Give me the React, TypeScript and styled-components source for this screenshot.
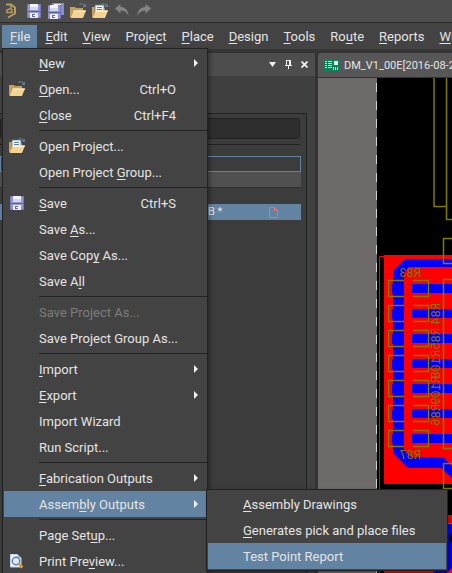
import React from "react";
import styled, { createGlobalStyle, css } from "styled-components";

const ink = "#e4e4e4";
const edge = "#222222";
const face = "#434343";
const accent = "#6283a2";

const GlobalStyle = createGlobalStyle`
  * { box-sizing: border-box; }
  body {
    margin: 0;
    background: #3c3c3c;
    color: ${ink};
    font-family: Roboto, "Noto Sans", sans-serif;
    font-size: 13px;
  }
  button {
    border: 0;
    padding: 0;
    background: none;
    color: inherit;
    font: inherit;
  }
  svg { flex: none; }
  u { text-underline-offset: 2px; text-decoration-thickness: 1px; text-decoration-skip-ink: none; }
`;

const Window = styled.div`
  display: flex;
  flex-direction: column;
  height: 100vh;
  overflow: hidden;
`;

const QuickBar = styled.header`
  display: flex;
  flex: none;
  align-items: center;
  gap: 6px;
  height: 23px;
  padding-left: 4px;
  background: #4d4d4d;
  border-bottom: 1px solid #2c2c2c;
`;

const ToolButton = styled.button`
  display: flex;
  width: 16px;
  height: 16px;
`;

const Logo = styled.span`
  display: flex;
  width: 16px;
  height: 16px;
`;

const MenuBar = styled.nav`
  display: flex;
  flex: none;
  align-items: stretch;
  height: 28px;
  padding: 2px 0 1px 2px;
  background: ${face};
  border-bottom: 2px solid #363636;
`;

const MenuSlot = styled.div`
  position: relative;
  display: flex;
  flex: none;
`;

const MenuTitle = styled.button<{ $open?: boolean }>`
  padding: 0 7px 0 8px;
  line-height: 23px;
  white-space: nowrap;
  background: ${(p) => (p.$open ? accent : "transparent")};
`;

const popup = css`
  position: absolute;
  z-index: 2;
  background: ${face};
  border: 1px solid ${edge};
  box-shadow: 2px 2px 4px rgba(0, 0, 0, 0.35);
`;

const FileMenu = styled.div`
  ${popup}
  top: 23px;
  left: 0;
  width: 206px;
  padding: 1px;
`;

const SubMenu = styled.div`
  ${popup}
  top: -2px;
  left: 100%;
  width: 242px;
  padding: 1px;
`;

const ItemSlot = styled.div`
  position: relative;
`;

const Item = styled.button<{ $active?: boolean }>`
  display: grid;
  grid-template-columns: 35px 1fr auto 30px;
  align-items: center;
  width: 100%;
  height: 26px;
  text-align: left;
  white-space: nowrap;
  background: ${(p) => (p.$active ? accent : "transparent")};
  &:disabled { color: #7c7c7c; }
`;

const ItemIcon = styled.span`
  display: flex;
  padding-left: 5px;
`;

const ItemArrow = styled.span`
  display: flex;
  justify-content: flex-end;
  padding-right: 8px;
`;

const Separator = styled.hr`
  height: 1px;
  margin: 2px -1px 2px 35px;
  border: 0;
  background: ${edge};
`;

const Workspace = styled.main`
  display: flex;
  flex: 1;
  min-height: 0;
  padding-top: 2px;
  gap: 3px;
  background: #333333;
`;

const Panel = styled.section`
  display: flex;
  flex: none;
  flex-direction: column;
  width: 315px;
  background: #404040;
`;

const PanelHeader = styled.div`
  display: flex;
  flex: none;
  align-items: center;
  justify-content: flex-end;
  height: 23px;
  padding-right: 3px;
  background: #4d4d4d;
`;

const PanelButton = styled.button`
  display: flex;
  width: 16px;
  height: 12px;
  align-items: center;
  justify-content: center;
`;

const PanelBody = styled.div`
  display: flex;
  flex: 1;
  flex-direction: column;
  margin: 37px 8px 0 0;
  padding: 4px 5px 0 0;
  background: #3c3c3c;
  border: 1px solid ${edge};
  border-width: 1px 1px 0 0;
`;

const Search = styled.input`
  flex: none;
  height: 21px;
  margin-right: 1px;
  padding: 0 6px;
  color: ${ink};
  background: #2e2e2e;
  border: 1px solid ${edge};
  border-radius: 3px;
`;

const PanelRule = styled.hr`
  flex: none;
  height: 1px;
  margin: 5px 1px 11px 0;
  border: 0;
  background: ${edge};
`;

const Row = styled.div<{ $kind: "outlined" | "filled" | "selected" }>`
  flex: none;
  height: 16px;
  line-height: 16px;
  font-size: 11px;
  ${(p) => p.$kind === "outlined" && css`border: 1px solid ${accent};`}
  ${(p) => p.$kind === "filled" && css`
    margin-bottom: 16px;
    background: #505050;
    border-bottom: 1px solid #303030;
  `}
  ${(p) => p.$kind === "selected" && css`
    display: flex;
    align-items: center;
    justify-content: space-between;
    padding: 0 23px 0 208px;
    background: ${accent};
  `}
`;

const Document = styled.section`
  display: flex;
  flex: 1;
  flex-direction: column;
  min-width: 0;
`;

const DocTab = styled.button`
  display: flex;
  flex: none;
  align-items: center;
  gap: 4px;
  height: 25px;
  padding-left: 6px;
  overflow: hidden;
  font-size: 11px;
  white-space: nowrap;
  background: #575757;
  border-bottom: 1px solid #333333;
  border-radius: 3px 0 0 0;
`;

const Canvas = styled.svg`
  display: block;
  flex: 1;
  width: 100%;
  min-height: 0;
  background: #000000;
`;

const LogoIcon = () => (
  <svg width="16" height="16" viewBox="0 0 16 16" fill="none" stroke="#b89b5e" strokeWidth="2">
    <path d="M2 1.500 H7 L11 4.500 V10.500 L4 14.500" />
    <path d="M7 2 V5.500 L3 7 V9.500 H8 V6" strokeWidth="1.500" />
  </svg>
);

const Disk = ({ back = false }: { back?: boolean }) => (
  <svg width="16" height="16" viewBox="0 0 16 16" shapeRendering="crispEdges">
    {back && <path d="M4 0h12v12h-3V3H4z" fill="#8a8ccc" />}
    {back && <path d="M6 1h7v2H6z" fill="#f2f3fb" />}
    <g transform={back ? "translate(-1 2)" : "translate(1 1)"}>
      <path d="M0 0h14v14H0z" fill="#7779b8" />
      <path d="M1 1h12v12H1z" fill="#9496d0" />
      <path d="M3 0h8v6H3z" fill="#f2f3fb" />
      <path d="M3 3h8v3H3z" fill="#d5d8ec" />
      <path d="M0 7h14v1H0z" fill="#5f61a3" />
      <path d="M3 9h8v5H3z" fill="#eceef8" />
      <path d="M5 10h3v3H5z" fill="#6365a8" />
      <path d="M6 11h2v1H6z" fill="#ffffff" />
    </g>
  </svg>
);

const Folder = ({ page = false }: { page?: boolean }) => (
  <svg width="17" height="16" viewBox="0 0 17 16">
    <path d="M0 4h5l1 1h7v9H0z" fill="#c79f5b" />
    {page && (
      <>
        <path d="M3 2h9v9H3z" fill="#f4f6fb" stroke="#5e7690" strokeWidth="0.800" />
        <path d="M5 4.500h5M5 6.500h5M5 8.500h5" stroke="#5d7fae" />
      </>
    )}
    <path d="M4 7.500h12L13 15H.5z" fill="#f3d394" />
    <path d="M4 7.500h12L15.500 9H3.500z" fill="#fff1c9" />
    <path d="M9.500 1.500c2-1.600 4-1 5 1.500" fill="none" stroke="#5d8298" strokeWidth="1.200" strokeDasharray="2.500 1" />
    <path d="M12.500 4h3.500V.5z" fill="#5d8298" />
  </svg>
);

const Bend = ({ flip = false }: { flip?: boolean }) => (
  <svg width="16" height="16" viewBox="0 0 16 16">
    <g transform={flip ? "matrix(-1 0 0 1 16 0)" : undefined}>
      <path d="M1 5.500 L6.500 1 V4 C11.500 4 14.500 7.500 14.500 13 C12.500 8.800 10.500 7.500 6.500 7.500 V10.500 Z" fill="#858585" />
    </g>
  </svg>
);

const Preview = () => (
  <svg width="16" height="16" viewBox="0 0 16 16">
    <path d="M1.500 1.500h7l3.500 3.500v9H1.500z" fill="#e8f0fa" stroke="#c3d3e8" />
    <path d="M8.500 1v4h4z" fill="#9bb6dc" />
    <circle cx="7" cy="8" r="3.700" fill="#dfeaf7" stroke="#5f7ea6" strokeWidth="1.400" />
    <path d="M9.500 10.500l4 4" stroke="#d99b3f" strokeWidth="2.500" />
  </svg>
);

const Arrow = () => (
  <svg width="4" height="8" viewBox="0 0 4 8"><path d="M0 0l4 4-4 4z" fill="#f0f0f0" /></svg>
);

const BoardIcon = () => (
  <svg width="16" height="12" viewBox="0 0 16 12" shapeRendering="crispEdges">
    <path d="M0 0h16v12H0z" fill="#0c8058" />
    <path d="M1 2.500h2M4 2.500h4M1 4.500h2M4 4.500h4M1 6.500h2M4 6.500h4M1 8.500h2M4 8.500h4" stroke="#a9e6c4" />
    <path d="M10 2h4v4h-4z" fill="#eaf5ee" />
    <path d="M9.500 8v3M11.500 8v3M13.500 8v3" stroke="#a9e6c4" />
  </svg>
);

const padRows = [280, 305, 330, 355, 380, 405, 430];
const designators: [string, number][] = [["R84", 303], ["R85", 328], ["R108", 350], ["R109", 376], ["R86", 404]];

const Board = () => (
  <Canvas role="img" aria-label="Board layout">
    <g transform="translate(-318 -78)">
      <rect x="318" y="78" width="59" height="2000" fill="#6e6a69" />
      <path d="M376.500 83V2000" stroke="#cfcfcf" strokeDasharray="9 9" />
      <path d="M384 256.500H379.500V600" fill="none" stroke="#ff0000" />
      <rect x="384" y="255" width="2000" height="229" fill="#ff0000" />
      <path d="M405 259H2000V267H409L404 273V450L411 457H443L460 474V484L452 478L441 468H408L393 453V271Z" fill="#0000ff" />
      {padRows.map((y) => (
        <g key={y}>
          <rect x="392" y={y + 4} width="12" height="10" fill="#0000ff" />
          <rect x="412" y={y + 4} width="1600" height="9" fill="#0000ff" />
          <path d={`M404 ${y + 0.5}H388.500V${y + 16.5}H404M413 ${y + 0.5}H428.500V${y + 16.5}H413`} fill="none" stroke="#807a00" strokeWidth="1.300" />
        </g>
      ))}
      <g fill="none" stroke="#7c7c00" strokeWidth="1.500">
        <path d="M434 78V206.500H446" />
        <path d="M446.500 78V219.500H2000" />
        <path d="M2000 238.500H443.500V263.500H2000" />
        <path d="M2000 279.500H443.500V448.500H2000" />
        <path d="M2000 463.500H443.500V488.500H2000" />
      </g>
      <g fill="#807a00" fontFamily="Liberation Mono, monospace" fontSize="12">
        <text transform="matrix(-1 0 0 1 421 277)">R83</text>
        <text transform="matrix(-1 0 0 1 421 459)">R87</text>
        {designators.map(([name, y]) => (
          <text key={name} transform={`matrix(0 1 1 0 440 ${y})`}>{name}</text>
        ))}
      </g>
      <rect x="384" y="515" width="2000" height="100" fill="#ff0000" />
      <path d="M448 524h6v42l-8 7h-14l14-10z" fill="#0000ff" />
      <circle cx="455" cy="538" r="6" fill="#000000" />
      <path d="M443 523.500h40" stroke="#808000" />
    </g>
  </Canvas>
);

/** Renders a label, underlining the character that follows "&". */
const Mnemonic = ({ text }: { text: string }) => {
  const at = text.indexOf("&");
  if (at < 0) return <>{text}</>;
  return <>{text.slice(0, at)}<u>{text[at + 1]}</u>{text.slice(at + 2)}</>;
};

type Entry = {
  label: string;
  icon?: React.ReactNode;
  keys?: string;
  arrow?: boolean;
  disabled?: boolean;
  active?: boolean;
  children?: Entry[];
};

const fileGroups: Entry[][] = [
  [
    { label: "&New", arrow: true },
    { label: "&Open...", icon: <Folder />, keys: "Ctrl+O" },
    { label: "&Close", keys: "Ctrl+F4" },
  ],
  [
    { label: "Open Project...", icon: <Folder page /> },
    { label: "Open Project &Group..." },
  ],
  [
    { label: "&Save", icon: <Disk />, keys: "Ctrl+S" },
    { label: "Save &As..." },
    { label: "Save Cop&y As..." },
    { label: "Save A&ll" },
  ],
  [
    { label: "Save Project As...", disabled: true },
    { label: "Save Project Group As..." },
  ],
  [
    { label: "&Import", arrow: true },
    { label: "&Export", arrow: true },
    { label: "Import Wizard" },
    { label: "Run Script..." },
  ],
  [
    { label: "&Fabrication Outputs", arrow: true },
    {
      label: "Assem&bly Outputs",
      arrow: true,
      active: true,
      children: [
        { label: "&Assembly Drawings" },
        { label: "&Generates pick and place files" },
        { label: "Test Point Report", active: true },
      ],
    },
  ],
  [
    { label: "Page Set&up..." },
    { label: "Print Pre&view...", icon: <Preview /> },
  ],
];

const MenuEntry = ({ entry }: { entry: Entry }) => (
  <ItemSlot>
    <Item $active={entry.active} disabled={entry.disabled}>
      <ItemIcon>{entry.icon}</ItemIcon>
      <span><Mnemonic text={entry.label} /></span>
      <span>{entry.keys}</span>
      <ItemArrow>{entry.arrow && <Arrow />}</ItemArrow>
    </Item>
    {entry.children && (
      <SubMenu>
        {entry.children.map((child) => <MenuEntry key={child.label} entry={child} />)}
      </SubMenu>
    )}
  </ItemSlot>
);

const topMenus = ["&Edit", "&View", "Proje&ct", "&Place", "&Design", "&Tools", "Ro&ute", "&Reports", "&Window"];

export default function App() {
  return (
    <Window>
      <GlobalStyle />
      <QuickBar>
        <Logo><LogoIcon /></Logo>
        <ToolButton aria-label="Save"><Disk /></ToolButton>
        <ToolButton aria-label="Save all"><Disk back /></ToolButton>
        <ToolButton aria-label="Open"><Folder /></ToolButton>
        <ToolButton aria-label="Open project"><Folder page /></ToolButton>
        <ToolButton aria-label="Undo"><Bend /></ToolButton>
        <ToolButton aria-label="Redo"><Bend flip /></ToolButton>
      </QuickBar>
      <MenuBar>
        <MenuSlot>
          <MenuTitle $open><Mnemonic text="&File" /></MenuTitle>
          <FileMenu>
            {fileGroups.map((group, i) => (
              <React.Fragment key={i}>
                {i > 0 && <Separator />}
                {group.map((entry) => <MenuEntry key={entry.label} entry={entry} />)}
              </React.Fragment>
            ))}
          </FileMenu>
        </MenuSlot>
        {topMenus.map((name) => (
          <MenuSlot key={name}><MenuTitle><Mnemonic text={name} /></MenuTitle></MenuSlot>
        ))}
      </MenuBar>
      <Workspace>
        <Panel>
          <PanelHeader>
            <PanelButton aria-label="Panel menu">
              <svg width="7" height="5" viewBox="0 0 7 5"><path d="M0 0h7L3.500 5z" fill="#f0f0f0" /></svg>
            </PanelButton>
            <PanelButton aria-label="Pin panel">
              <svg width="7" height="9" viewBox="0 0 7 9" shapeRendering="crispEdges">
                <path d="M1 0h5v5h1v1H4v3H3V6H0V5h1zM2 1v4h2V1z" fill="#f0f0f0" fillRule="evenodd" />
              </svg>
            </PanelButton>
            <PanelButton aria-label="Close panel">
              <svg width="7" height="7" viewBox="0 0 7 7"><path d="M.5.5l6 6M6.500.5l-6 6" stroke="#f0f0f0" strokeWidth="1.800" /></svg>
            </PanelButton>
          </PanelHeader>
          <PanelBody>
            <Search aria-label="Search" />
            <PanelRule />
            <Row $kind="outlined" />
            <Row $kind="filled" />
            <Row $kind="selected">
              <span>B *</span>
              <svg width="9" height="11" viewBox="0 0 9 11" fill="none" stroke="#ff6a64">
                <path d="M.5.5h5l3 3v7h-8zM5.500.5v3h3" />
              </svg>
            </Row>
          </PanelBody>
        </Panel>
        <Document>
          <DocTab><BoardIcon />DM_V1_00E[2016-08-2</DocTab>
          <Board />
        </Document>
      </Workspace>
    </Window>
  );
}
